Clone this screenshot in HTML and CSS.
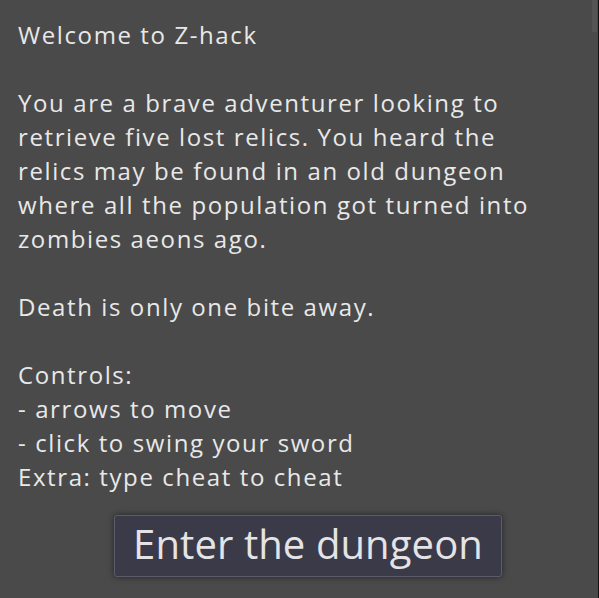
FILE: index.html
```html
<!DOCTYPE html>
<html>
<head>
<meta charset="utf-8">
<link rel="stylesheet" href="styles.css">
</head>
<body>
<div class="screen">
  <div class="intro">
    <p>Welcome to Z-hack</p>
    <p>You are a brave adventurer looking to<br>retrieve five lost relics. You heard the<br>relics may be found in an old dungeon<br>where all the population got turned into<br>zombies aeons ago.</p>
    <p>Death is only one bite away.</p>
    <p>Controls:<br>- arrows to move<br>- click to swing your sword<br>Extra: type cheat to cheat</p>
  </div>
  <div class="actions">
    <button class="enter">Enter the dungeon</button>
  </div>
  <div class="scroll"></div>
  <div class="edge"></div>
</div>
</body>
</html>
```
FILE: styles.css
```css
html, body {
  margin: 0;
  padding: 0;
  background: #4a4a4a;
}
.screen {
  width: 599px;
  height: 598px;
  background: #4a4a4a;
  position: relative;
  overflow: hidden;
  font-family: "Open Sans", "DejaVu Sans", sans-serif;
  color: #e8e8e8;
}
.intro {
  padding: 18px 0 0 18px;
  font-size: 24px;
  line-height: 34px;
  letter-spacing: 1.6px;
}
.intro p {
  margin: 0 0 34px 0;
  white-space: nowrap;
}
.intro p:last-child {
  margin-bottom: 0;
}
.actions {
  display: flex;
  justify-content: flex-start;
  padding: 21px 0 0 114px;
}
.enter {
  width: 388px;
  height: 62px;
  background: #3b3a48;
  border: 1px solid #5c5b6b;
  border-radius: 3px;
  box-shadow: 0 0 6px rgba(0,0,0,0.5);
  color: #e4e4e6;
  font-family: "Open Sans", "DejaVu Sans", sans-serif;
  font-size: 40px;
  letter-spacing: 0.1px;
  line-height: 1;
  padding: 0 0 5px 0;
  white-space: nowrap;
}
.scroll {
  position: absolute;
  top: 0;
  right: 2px;
  width: 5px;
  height: 32px;
  background: #545454;
}
.edge {
  position: absolute;
  top: 0;
  right: 0;
  width: 1px;
  height: 100%;
  background: #111;
}
```
